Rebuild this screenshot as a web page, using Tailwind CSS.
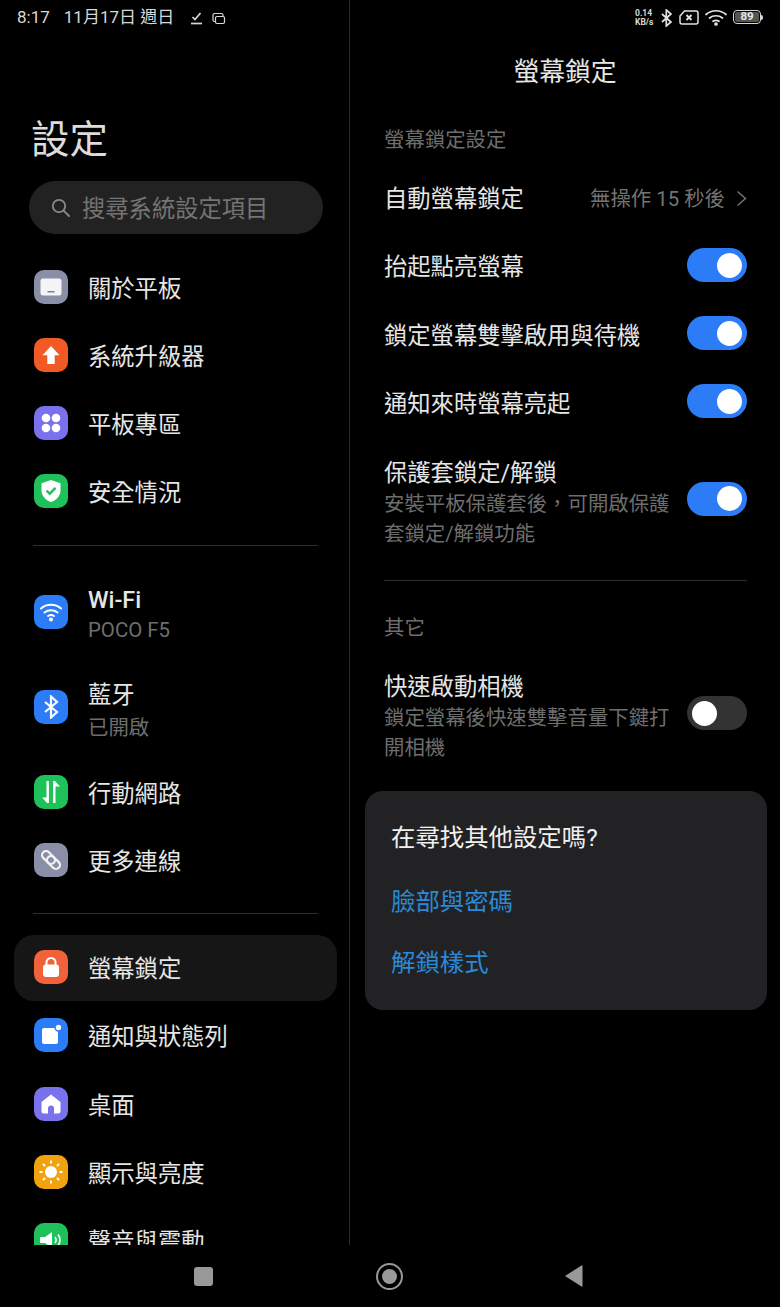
<!DOCTYPE html>
<html lang="zh-Hant">
<head>
    <meta charset="UTF-8">
    <meta name="viewport" content="width=device-width, initial-scale=1.0">
    <title>螢幕鎖定</title>
    <script src="https://cdn.jsdelivr.net/npm/@tailwindcss/browser@4"></script>
</head>
<body class="bg-black">
<div class="w-[780px] h-[1307px] bg-black overflow-hidden flex flex-col text-[#e6e6e6] font-['Roboto','Noto_Sans_CJK_TC',sans-serif]">
    <div class="flex h-[1245px]">
        <!-- left: settings list -->
        <aside class="w-[350px] h-[1245px] overflow-hidden border-r border-[#2a2a2a] shrink-0">
            <div class="h-[36px] flex items-center pl-[17px] text-[17px] text-[#d8d8d8]">
                <span>8:17</span>
                <span class="ml-[14px]">11月17日 週日</span>
                <svg class="ml-[16px]" width="13" height="14" viewBox="0 0 13 14" fill="none" stroke="#d8d8d8" stroke-width="1.700"><path d="M2.500 6l2.500 2.500L10.500 2"/><path d="M1 12.500h11"/></svg>
                <svg class="ml-[9px]" width="14" height="13" viewBox="0 0 14 13" fill="none" stroke="#d8d8d8" stroke-width="1.200"><rect x="1" y="1.500" width="10" height="8" rx="1.500"/><rect x="3.500" y="4.500" width="9" height="7" rx="1.500" fill="#000"/></svg>
            </div>
            <h1 class="mt-[81px] ml-[31px] h-[46px] flex items-center text-[38.500px] leading-none text-[#dcdcdc]">設定</h1>
            <div class="mt-[18px] ml-[29px] w-[294px] h-[53px] rounded-full bg-[#222222] flex items-center pl-[22px] text-[23.300px] text-[#747474]">
                <svg width="19" height="19" viewBox="0 0 19 19" fill="none" stroke="#8a8a8a" stroke-width="1.800" stroke-linecap="round"><circle cx="8" cy="8" r="6.200"/><path d="M12.600 12.600L18 18"/></svg>
                <span class="ml-[12px] pt-[4px]">搜尋系統設定項目</span>
            </div>

            <ul class="mt-[19px]">
                <li class="h-[68px] pl-[34px] flex items-center">
                    <span class="w-[34px] h-[34px] rounded-[10px] bg-[#8a8ea6] flex items-center justify-center">
                        <svg width="22" height="18" viewBox="0 0 22 18"><rect x="0.500" y="0.500" width="21" height="17" rx="2.500" fill="#f4f4f6"/><rect x="7.500" y="13" width="7" height="1.500" fill="#7d8196"/></svg>
                    </span>
                    <span class="ml-[20px] pt-[4px] text-[23.300px]">關於平板</span>
                </li>
                <li class="h-[68px] pl-[34px] flex items-center">
                    <span class="w-[34px] h-[34px] rounded-[10px] bg-[#f15a24] flex items-center justify-center">
                        <svg width="18" height="20" viewBox="0 0 18 20" fill="#fff"><path d="M9 1l8.500 9.200h-4.800V19H5.300v-8.800H.5z"/></svg>
                    </span>
                    <span class="ml-[20px] pt-[4px] text-[23.300px]">系統升級器</span>
                </li>
                <li class="h-[68px] pl-[34px] flex items-center">
                    <span class="w-[34px] h-[34px] rounded-[10px] bg-[#7a72ec] flex items-center justify-center">
                        <svg width="20" height="20" viewBox="0 0 20 20" fill="#fff"><circle cx="5" cy="5" r="4.300"/><circle cx="15" cy="5" r="4.300"/><circle cx="5" cy="15" r="4.300"/><circle cx="15" cy="15" r="4.300"/></svg>
                    </span>
                    <span class="ml-[20px] pt-[4px] text-[23.300px]">平板專區</span>
                </li>
                <li class="h-[68px] pl-[34px] flex items-center">
                    <span class="w-[34px] h-[34px] rounded-[10px] bg-[#1fc25a] flex items-center justify-center">
                        <svg width="22" height="24" viewBox="0 0 22 24"><path d="M11 1l9.500 3.200v7.300c0 5.500-4 9.600-9.500 11.500C5.500 21.100 1.500 17 1.500 11.500V4.200z" fill="#fff"/><path d="M6.500 11.500l3.200 3.200 5.800-5.800" fill="none" stroke="#1fc25a" stroke-width="2.400"/></svg>
                    </span>
                    <span class="ml-[20px] pt-[4px] text-[23.300px]">安全情況</span>
                </li>
            </ul>

            <div class="mt-[20px] ml-[33px] w-[285px] h-px bg-[#2e2e2e]"></div>

            <div class="mt-[19px] h-[94px] pl-[34px] flex items-center">
                <span class="w-[34px] h-[34px] rounded-[10px] bg-[#2b7cf6] flex items-center justify-center">
                    <svg width="24" height="20" viewBox="0 0 24 20" fill="none" stroke="#fff" stroke-width="2" stroke-linecap="round"><path d="M2 6.500c5.500-5 14.500-5 20 0"/><path d="M5.500 10.500c3.500-3 9.500-3 13 0"/><path d="M9 14c1.800-1.200 4.200-1.200 6 0"/><circle cx="12" cy="17.500" r="1" fill="#fff"/></svg>
                </span>
                <div class="ml-[20px] pt-[6px] flex flex-col">
                    <span class="text-[23.300px] leading-[31px] font-medium">Wi-Fi</span>
                    <span class="text-[20.400px] leading-[29px] text-[#6e6e6e]">POCO F5</span>
                </div>
            </div>
            <div class="mt-px h-[94px] pl-[34px] flex items-center">
                <span class="w-[34px] h-[34px] rounded-[10px] bg-[#2b7cf6] flex items-center justify-center">
                    <svg width="16" height="24" viewBox="0 0 16 24" fill="none" stroke="#fff" stroke-width="2.200"><path d="M2 7l12 10-6 5.500V1.500L14 7 2 17"/></svg>
                </span>
                <div class="ml-[20px] pt-[6px] flex flex-col">
                    <span class="text-[23.300px] leading-[34px]">藍牙</span>
                    <span class="mt-[2px] text-[20.400px] leading-[29px] text-[#6e6e6e]">已開啟</span>
                </div>
            </div>
            <ul class="mt-[4px]">
                <li class="h-[68px] pl-[34px] flex items-center">
                    <span class="w-[34px] h-[34px] rounded-[10px] bg-[#1fc25a] flex items-center justify-center">
                        <svg width="20" height="24" viewBox="0 0 20 24" fill="#fff"><path d="M5.500 1h2.400v22H6L1 17.500h4.500z"/><path d="M14.500 23h-2.400V1H14l5 5.500h-4.500z"/></svg>
                    </span>
                    <span class="ml-[20px] pt-[4px] text-[23.300px]">行動網路</span>
                </li>
                <li class="h-[68px] pl-[34px] flex items-center">
                    <span class="w-[34px] h-[34px] rounded-[10px] bg-[#8a8ea6] flex items-center justify-center">
                        <svg width="26" height="26" viewBox="0 0 26 26" fill="none" stroke="#f2f2f5" stroke-width="2.200"><rect x="2" y="9" width="15" height="8" rx="4" transform="rotate(45 13 13)"/><rect x="9" y="9" width="15" height="8" rx="4" transform="rotate(45 13 13)"/></svg>
                    </span>
                    <span class="ml-[20px] pt-[4px] text-[23.300px]">更多連線</span>
                </li>
            </ul>

            <div class="mt-[19px] ml-[33px] w-[285px] h-px bg-[#2e2e2e]"></div>

            <div class="mt-[21px] ml-[14px] w-[323px] h-[66px] rounded-[20px] bg-[#161616] pl-[20px] flex items-center">
                <span class="mb-[2px] w-[34px] h-[34px] rounded-[10px] bg-[#f0633a] flex items-center justify-center">
                    <svg width="18" height="22" viewBox="0 0 18 22"><path d="M4.500 10V6.500a4.500 4.500 0 0 1 9 0V10" fill="none" stroke="#fff" stroke-width="2"/><rect x="1" y="8.500" width="16" height="12.500" rx="3" fill="#fff"/></svg>
                </span>
                <span class="ml-[20px] pt-[2px] text-[23.300px]">螢幕鎖定</span>
            </div>
            <ul>
                <li class="h-[68px] pl-[34px] flex items-center">
                    <span class="w-[34px] h-[34px] rounded-[10px] bg-[#2b7cf6] flex items-center justify-center">
                        <svg width="26" height="26" viewBox="0 0 26 26"><path d="M6 6h13a1 1 0 0 1 1 1v13a2 2 0 0 1-2 2H6a2 2 0 0 1-2-2V8a2 2 0 0 1 2-2z" fill="#fff"/><circle cx="20.500" cy="5.500" r="4.200" fill="#2b7cf6"/><circle cx="20.500" cy="5.500" r="2.700" fill="#fff"/></svg>
                    </span>
                    <span class="ml-[20px] pt-[4px] text-[23.300px]">通知與狀態列</span>
                </li>
                <li class="mt-px h-[68px] pl-[34px] flex items-center">
                    <span class="w-[34px] h-[34px] rounded-[10px] bg-[#7a72ec] flex items-center justify-center">
                        <svg width="20" height="20" viewBox="0 0 20 20"><path d="M10 .5L19.500 8v9.500a2 2 0 0 1-2 2H13v-5a3 3 0 0 0-6 0v5H2.500a2 2 0 0 1-2-2V8z" fill="#fff"/></svg>
                    </span>
                    <span class="ml-[20px] pt-[4px] text-[23.300px]">桌面</span>
                </li>
                <li class="h-[68px] pl-[34px] flex items-center">
                    <span class="w-[34px] h-[34px] rounded-[10px] bg-[#f0a30f] flex items-center justify-center">
                        <svg width="26" height="26" viewBox="0 0 26 26" stroke="#fff" stroke-width="2"><circle cx="13" cy="13" r="6" fill="#fff" stroke="none"/><path d="M13 1.500v3M13 21.500v3M1.500 13h3M21.500 13h3M4.900 4.900l2.100 2.100M19 19l2.100 2.100M21.100 4.900L19 7M7 19l-2.100 2.100"/></svg>
                    </span>
                    <span class="ml-[20px] pt-[4px] text-[23.300px]">顯示與亮度</span>
                </li>
                <li class="h-[68px] pl-[34px] flex items-center">
                    <span class="w-[34px] h-[34px] rounded-[10px] bg-[#1fc25a] flex items-center justify-center">
                        <svg width="24" height="20" viewBox="0 0 24 20" fill="none"><path d="M1 7h5l7-5v16l-7-5H1z" fill="#fff"/><path d="M16 7c1.300 1.800 1.300 4.200 0 6M19 4.500c2.600 3.200 2.600 7.800 0 11" stroke="#fff" stroke-width="1.600"/></svg>
                    </span>
                    <span class="ml-[20px] pt-[4px] text-[23.300px]">聲音與震動</span>
                </li>
            </ul>
        </aside>

        <!-- right: lock screen detail -->
        <main class="flex-1 min-w-0">
            <div class="h-[36px] relative">
                <div class="absolute left-[285px] top-[9px] w-[24px] text-[8.500px] leading-[9px] font-bold text-[#d8d8d8]">0.14<br>KB/s</div>
                <svg class="absolute left-[311px] top-[9px]" width="11" height="18" viewBox="0 0 11 18" fill="none" stroke="#e2e2e2" stroke-width="1.700"><path d="M1 5l9 8-4.700 4V1L10 5l-9 8"/></svg>
                <svg class="absolute left-[329px] top-[10px]" width="20" height="15" viewBox="0 0 20 15" fill="none" stroke="#e2e2e2" stroke-width="1.500"><path d="M5.500 1H17a2 2 0 0 1 2 2v9a2 2 0 0 1-2 2H3a2 2 0 0 1-2-2V6z"/><path d="M7.500 5l5 5M12.500 5l-5 5" stroke-width="1.800"/></svg>
                <svg class="absolute left-[355px] top-[9px]" width="22" height="17" viewBox="0 0 22 17" fill="none" stroke="#e2e2e2" stroke-width="1.700" stroke-linecap="round"><path d="M1 5.500c5.500-5 14.500-5 20 0"/><path d="M4.500 9c3.500-3 9.500-3 13 0"/><path d="M8 12.300c1.800-1.200 4.200-1.200 6 0"/><circle cx="11" cy="15" r="1" fill="#e2e2e2"/></svg>
                <div class="absolute left-[383px] top-[10px] w-[28px] h-[14px] rounded-[4px] border border-[#d8d8d8] p-px">
                    <div class="w-full h-full rounded-[2px] bg-[#555555] flex items-center justify-center text-[11.500px] leading-none font-bold text-[#e8e8e8]">89</div>
                </div>
                <div class="absolute left-[411px] top-[15px] w-[2px] h-[5px] rounded-r-sm bg-[#d8d8d8]"></div>
            </div>

            <h2 class="mt-[18px] text-center text-[25.800px] leading-[36px]">螢幕鎖定</h2>

            <div class="pl-[34px] pr-[33px]">
                <p class="mt-[35px] h-[30px] flex items-center text-[20.400px] text-[#6e6e6e]">螢幕鎖定設定</p>
                <div class="mt-[19px] h-[50px] flex items-center justify-between">
                    <span class="text-[23.300px]">自動螢幕鎖定</span>
                    <span class="flex items-center text-[20.400px] text-[#747474]">無操作 15 秒後
                        <svg class="ml-[11px]" width="11" height="17" viewBox="0 0 11 17" fill="none" stroke="#747474" stroke-width="1.500"><path d="M1.500 1.500l8 7-8 7"/></svg>
                    </span>
                </div>
                <div class="mt-[7px] h-[68px] flex items-center justify-between">
                    <span class="pt-[4px] text-[23.300px]">抬起點亮螢幕</span>
                    <span class="w-[60px] h-[34px] rounded-full bg-[#2b7cf6] flex items-center justify-end pr-[5px]"><span class="w-[25px] h-[25px] rounded-full bg-white"></span></span>
                </div>
                <div class="h-[68px] flex items-center justify-between">
                    <span class="pt-[6px] text-[23.300px]">鎖定螢幕雙擊啟用與待機</span>
                    <span class="w-[60px] h-[34px] rounded-full bg-[#2b7cf6] flex items-center justify-end pr-[5px]"><span class="w-[25px] h-[25px] rounded-full bg-white"></span></span>
                </div>
                <div class="h-[68px] flex items-center justify-between">
                    <span class="pt-[6px] text-[23.300px]">通知來時螢幕亮起</span>
                    <span class="w-[60px] h-[34px] rounded-full bg-[#2b7cf6] flex items-center justify-end pr-[5px]"><span class="w-[25px] h-[25px] rounded-full bg-white"></span></span>
                </div>
                <div class="mt-[23px] flex items-center justify-between">
                    <div class="w-[289px]">
                        <p class="text-[23.300px] leading-[31px]">保護套鎖定/解鎖</p>
                        <p class="text-[20.400px] leading-[30px] text-[#6e6e6e]">安裝平板保護套後&#65292;可開啟保護套鎖定/解鎖功能</p>
                    </div>
                    <span class="mb-[10px] w-[60px] h-[34px] rounded-full bg-[#2b7cf6] flex items-center justify-end pr-[5px]"><span class="w-[25px] h-[25px] rounded-full bg-white"></span></span>
                </div>
                <div class="mt-[31px] h-px bg-[#2e2e2e]"></div>
                <p class="mt-[32px] h-[30px] flex items-center text-[20.400px] text-[#6e6e6e]">其它</p>
                <div class="mt-[29px] flex items-center justify-between">
                    <div class="w-[289px]">
                        <p class="text-[23.300px] leading-[31px]">快速啟動相機</p>
                        <p class="text-[20.400px] leading-[30px] text-[#6e6e6e]">鎖定螢幕後快速雙擊音量下鍵打開相機</p>
                    </div>
                    <span class="mb-[9px] w-[60px] h-[34px] rounded-full bg-[#333333] flex items-center pl-[5px]"><span class="w-[25px] h-[25px] rounded-full bg-white"></span></span>
                </div>
            </div>

            <section class="mt-[28px] ml-[15px] w-[402px] h-[219px] rounded-[18px] bg-[#222224] pl-[26px] pt-[30px]">
                <p class="text-[24.400px] leading-[34px] text-[#f0f0f0]">在尋找其他設定嗎?</p>
                <a class="block mt-[30px] text-[24.400px] leading-[34px] text-[#2a8ad8]">臉部與密碼</a>
                <a class="block mt-[27px] text-[24.400px] leading-[34px] text-[#2a8ad8]">解鎖樣式</a>
            </section>
        </main>
    </div>

    <!-- navigation bar -->
    <nav class="h-[62px] relative">
        <div class="absolute left-[194px] top-[22px] w-[19px] h-[19px] rounded-[3px] bg-[#999999]"></div>
        <div class="absolute left-[376px] top-[18px] w-[27px] h-[27px] rounded-full border-2 border-[#999999] flex items-center justify-center">
            <div class="w-[15px] h-[15px] rounded-full bg-[#999999]"></div>
        </div>
        <svg class="absolute left-[564px] top-[19px]" width="19" height="24" viewBox="0 0 19 24"><path d="M1 12L17.500 1.500a.6.6 0 0 1 1 .5v20a.6.6 0 0 1-1 .5z" fill="#999999"/></svg>
    </nav>
</div>
</body>
</html>
